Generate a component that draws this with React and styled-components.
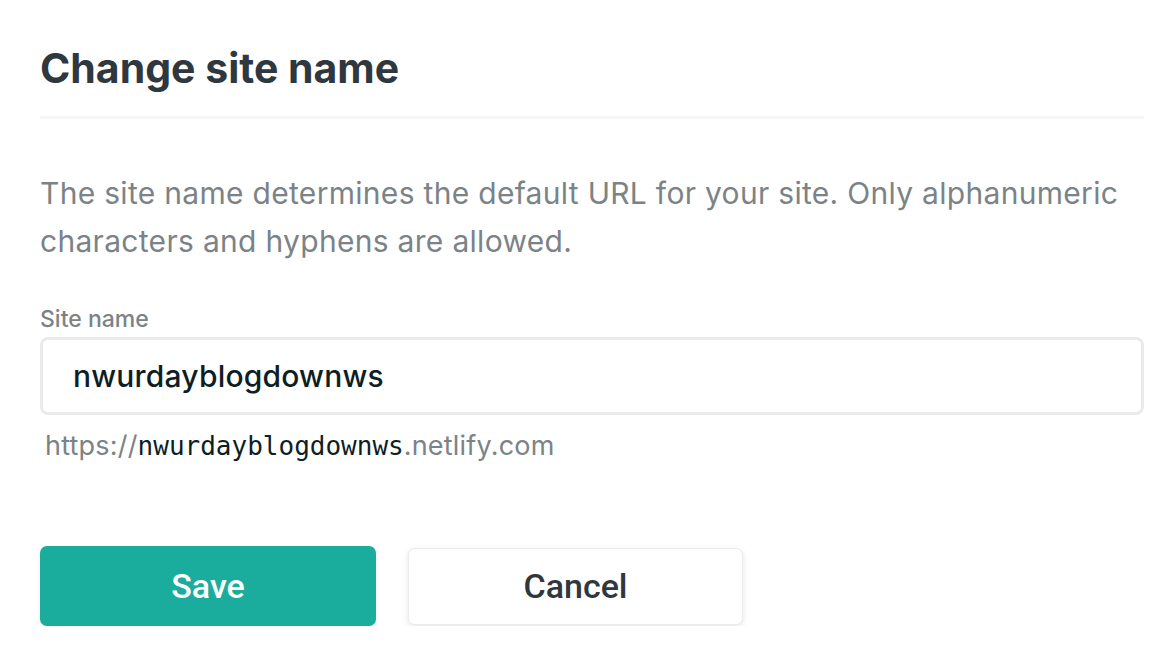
import React from "react";
import styled, { createGlobalStyle } from "styled-components";

const Global = createGlobalStyle`
  html, body { margin: 0; padding: 0; background: #ffffff; }
  body { font-family: Inter, "Open Sans", "Liberation Sans", sans-serif; -webkit-font-smoothing: antialiased; }
  * { box-sizing: border-box; }
`;

const Page = styled.div`
  padding: 40px 28px 0 40px;
  display: flex;
  flex-direction: column;
`;

const Header = styled.div`
  padding-bottom: 20px;
  border-bottom: 3px solid #f5f6f7;
`;

const Title = styled.h1`
  margin: 0;
  font-size: 41px;
  line-height: 56px;
  font-weight: 700;
  color: #2e383e;
  letter-spacing: 0px;
`;

const Description = styled.p`
  margin: 50px 0 0;
  font-size: 30px;
  line-height: 48px;
  color: #7b8387;
  font-weight: 400;
  letter-spacing: 0.3px;
`;

const Field = styled.div`
  margin-top: 40px;
  display: flex;
  flex-direction: column;
`;

const Label = styled.label`
  font-size: 23px;
  line-height: 28px;
  font-weight: 500;
  color: #7b8387;
  margin-bottom: 4px;
`;

const Input = styled.div`
  height: 78px;
  border: 3px solid #e9ebeb;
  border-radius: 8px;
  display: flex;
  align-items: center;
  padding: 0 30px;
  font-size: 30px;
  font-weight: 500;
  color: #0e1e25;
  letter-spacing: 0.2px;
`;

const Hint = styled.div`
  margin-top: 14px;
  padding-left: 5px;
  font-size: 27px;
  line-height: 34px;
  color: #7b8387;
  letter-spacing: 0.2px;
`;

const Mono = styled.span`
  font-family: "DejaVu Sans Mono", "Liberation Mono", monospace;
  color: #0e1e25;
  font-size: 26px;
  letter-spacing: 0;
`;

const Actions = styled.div`
  margin-top: 83px;
  display: flex;
  gap: 32px;
  align-items: center;
`;

const Button = styled.button`
  width: ${(p) => p.$w}px;
  height: ${(p) => p.$h}px;
  border-radius: 7px;
  font-family: Roboto, Inter, sans-serif;
  font-size: 34px;
  font-weight: 500;
  cursor: pointer;
  background: ${(p) => (p.$primary ? "#1aad9d" : "#ffffff")};
  color: ${(p) => (p.$primary ? "#ffffff" : "#2e383e")};
  border: ${(p) => (p.$primary ? "none" : "1px solid #ececec")};
  box-shadow: ${(p) =>
    p.$primary ? "0 2px 4px rgba(0,0,0,0.08)" : "0 2px 6px rgba(0,0,0,0.10)"};
`;

export default function App() {
  return (
    <>
      <Global />
      <Page>
        <Header>
          <Title>Change site name</Title>
        </Header>
        <Description>
          The site name determines the default URL for your site. Only alphanumeric
          characters and hyphens are allowed.
        </Description>
        <Field>
          <Label>Site name</Label>
          <Input>nwurdayblogdownws</Input>
          <Hint>
            https://<Mono>nwurdayblogdownws</Mono>.netlify.com
          </Hint>
        </Field>
        <Actions>
          <Button $primary $w={336} $h={80}>Save</Button>
          <Button $w={335} $h={77}>Cancel</Button>
        </Actions>
      </Page>
    </>
  );
}
